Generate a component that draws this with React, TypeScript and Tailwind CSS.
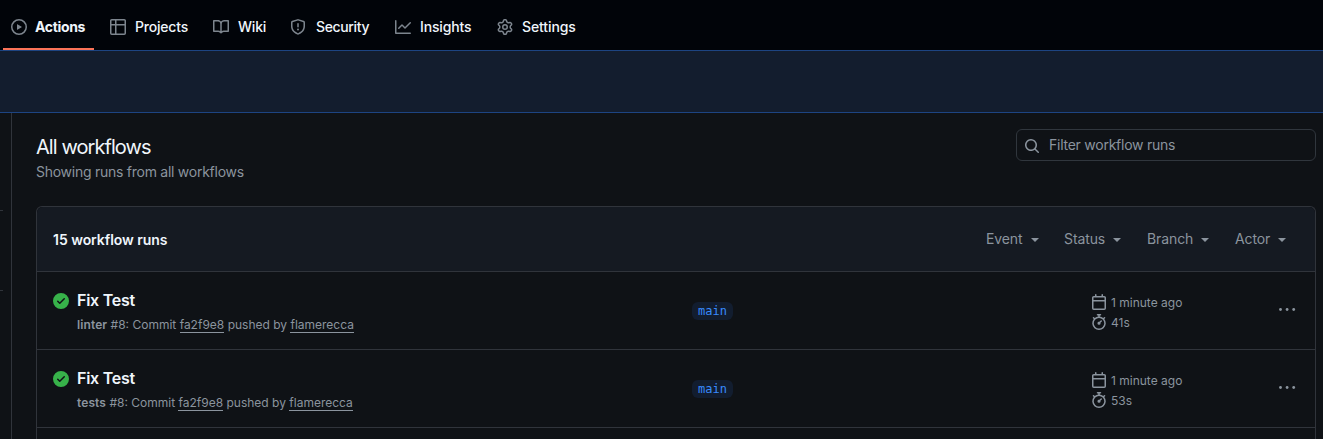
import type { ReactNode } from "react";

const paths = {
  play: "M1.5 8a6.5 6.5 0 1113 0 6.5 6.5 0 01-13 0zM8 0a8 8 0 100 16A8 8 0 008 0zM6.379 5.227A.25.25 0 006 5.442v5.117a.25.25 0 00.379.214l4.264-2.559a.25.25 0 000-.428L6.379 5.227z",
  table:
    "M0 1.75C0 .784.784 0 1.75 0h12.5C15.216 0 16 .784 16 1.75v3.585a.746.746 0 010 .83v8.085A1.75 1.75 0 0114.25 16H6.309a.748.748 0 01-1.118 0H1.75A1.75 1.75 0 010 14.25V6.165a.746.746 0 010-.83V1.75zM1.5 6.5v7.75c0 .138.112.25.25.25H5v-8H1.5zM5 5H1.5V1.75a.25.25 0 01.25-.25H5V5zm1.5 1.5v8h7.75a.25.25 0 00.25-.25V6.5h-8zm8-1.5h-8V1.5h7.75a.25.25 0 01.25.25V5z",
  book: "M0 1.75A.75.75 0 01.75 1h4.253c1.227 0 2.317.59 3 1.501A3.744 3.744 0 0111.006 1h4.245a.75.75 0 01.75.75v10.5a.75.75 0 01-.75.75h-4.507a2.25 2.25 0 00-1.591.659l-.622.621a.75.75 0 01-1.06 0l-.622-.621A2.25 2.25 0 005.258 13H.75a.75.75 0 01-.75-.75V1.75zm8.755 3a2.25 2.25 0 012.25-2.25H14.5v9h-3.757c-.71 0-1.4.201-1.992.572l.004-7.322zm-1.504 7.324l.004-5.073-.002-2.253A2.25 2.25 0 005.003 2.5H1.5v9h3.757a3.75 3.75 0 011.994.574z",
  shield:
    "M7.467.133a1.75 1.75 0 011.066 0l5.25 1.68A1.75 1.75 0 0115 3.48V7c0 1.566-.32 3.182-1.303 4.682-.983 1.498-2.585 2.813-5.032 3.855a1.7 1.7 0 01-1.33 0c-2.447-1.042-4.049-2.357-5.032-3.855C1.32 10.182 1 8.566 1 7V3.48a1.75 1.75 0 011.217-1.667l5.25-1.68zm.61 1.429a.25.25 0 00-.153 0l-5.25 1.68a.25.25 0 00-.174.238V7c0 1.358.275 2.666 1.057 3.86.784 1.194 2.121 2.34 4.366 3.297a.2.2 0 00.154 0c2.245-.956 3.582-2.104 4.366-3.298C13.225 9.666 13.5 8.36 13.5 7V3.48a.25.25 0 00-.174-.237l-5.25-1.68zM9 10.5a1 1 0 11-2 0 1 1 0 012 0zm-.25-5.75a.75.75 0 10-1.5 0v3a.75.75 0 001.5 0v-3z",
  graph:
    "M1.5 1.75a.75.75 0 00-1.5 0v12.5c0 .414.336.75.75.75h14.5a.75.75 0 000-1.5H1.5V1.75zm14.28 2.53a.75.75 0 00-1.06-1.06L10 7.94 7.53 5.47a.75.75 0 00-1.06 0L3.22 8.72a.75.75 0 001.06 1.06L7 7.06l2.47 2.47a.75.75 0 001.06 0l5.25-5.25z",
  gear: "M7.429 1.525a6.593 6.593 0 011.142 0c.036.003.108.036.137.146l.289 1.105c.147.56.55.967.997 1.189.174.086.341.183.501.29.417.278.97.423 1.53.27l1.102-.303c.11-.03.175.016.195.046.219.31.41.641.573.989.014.031.022.11-.059.19l-.815.806c-.411.406-.562.957-.53 1.456a4.588 4.588 0 010 .582c-.032.499.119 1.05.53 1.456l.815.806c.08.08.073.159.059.19a6.494 6.494 0 01-.573.99c-.02.029-.086.074-.195.045l-1.103-.303c-.559-.153-1.112-.008-1.529.27-.16.107-.327.204-.5.29-.449.222-.851.628-.998 1.189l-.289 1.105c-.029.11-.101.143-.137.146a6.613 6.613 0 01-1.142 0c-.036-.003-.108-.037-.137-.146l-.289-1.105c-.147-.56-.55-.967-.997-1.189a4.502 4.502 0 01-.501-.29c-.417-.278-.97-.423-1.53-.27l-1.102.303c-.11.03-.175-.016-.195-.046a6.492 6.492 0 01-.573-.989c-.014-.031-.022-.11.059-.19l.815-.806c.411-.406.562-.957.53-1.456a4.587 4.587 0 010-.582c.032-.499-.119-1.05-.53-1.456l-.815-.806c-.08-.08-.073-.159-.059-.19a6.44 6.44 0 01.573-.99c.02-.029.086-.075.195-.045l1.103.303c.559.153 1.112.008 1.529-.27.16-.107.327-.204.5-.29.449-.222.851-.628.998-1.189l.289-1.105c.029-.11.101-.143.137-.146zM8 0c-.236 0-.47.01-.701.03-.743.065-1.29.615-1.458 1.261l-.29 1.106c-.017.066-.078.158-.211.224a5.994 5.994 0 00-.668.386c-.123.082-.233.09-.3.071L3.27 2.776c-.644-.177-1.392.02-1.82.63a7.977 7.977 0 00-.704 1.217c-.315.675-.111 1.422.363 1.891l.815.806c.05.048.098.147.088.294a6.084 6.084 0 000 .772c.01.147-.038.246-.088.294l-.815.806c-.474.469-.678 1.216-.363 1.891.2.428.436.835.704 1.218.428.609 1.176.806 1.82.63l1.103-.303c.066-.019.176-.011.299.071.213.143.436.272.668.386.133.066.194.158.212.224l.289 1.106c.169.646.715 1.196 1.458 1.26a8.094 8.094 0 001.402 0c.743-.064 1.29-.614 1.458-1.26l.29-1.106c.017-.066.078-.158.211-.224a5.98 5.98 0 00.668-.386c.123-.082.233-.09.3-.071l1.102.302c.644.177 1.392-.02 1.82-.63.268-.382.505-.789.704-1.217.315-.675.111-1.422-.364-1.891l-.814-.806c-.05-.048-.098-.147-.088-.294a6.1 6.1 0 000-.772c-.01-.147.039-.246.088-.294l.814-.806c.475-.469.679-1.216.364-1.891a7.992 7.992 0 00-.704-1.218c-.428-.609-1.176-.806-1.82-.63l-1.103.303c-.066.019-.176.011-.299-.071a5.991 5.991 0 00-.668-.386c-.133-.066-.194-.158-.212-.224L10.16 1.29C9.99.645 9.444.095 8.701.031A8.094 8.094 0 008 0zM9.5 8a1.5 1.5 0 11-3 0 1.5 1.5 0 013 0zM11 8a3 3 0 11-6 0 3 3 0 016 0z",
  calendar:
    "M4.75 0a.75.75 0 01.75.75V2h5V.75a.75.75 0 011.5 0V2h1.25c.966 0 1.75.784 1.75 1.75v10.5A1.75 1.75 0 0113.25 16H2.75A1.75 1.75 0 011 14.25V3.75C1 2.784 1.784 2 2.75 2H4V.75A.75.75 0 014.75 0zm0 3.5h8.5a.25.25 0 01.25.25V6h-11V3.75a.25.25 0 01.25-.25h2zm-2.25 4v6.75c0 .138.112.25.25.25h10.5a.25.25 0 00.25-.25V7.5h-11z",
  stopwatch:
    "M5.75.75A.75.75 0 016.5 0h3a.75.75 0 010 1.5h-.75v1l-.001.041a6.718 6.718 0 013.464 1.435l.007-.006.75-.75a.75.75 0 111.06 1.06l-.75.75-.006.007a6.75 6.75 0 11-10.548 0L2.72 5.03l-.75-.75a.75.75 0 011.06-1.06l.75.75.007.006A6.718 6.718 0 017.25 2.541a.756.756 0 010-.041v-1H6.5a.75.75 0 01-.75-.75zM8 14.5A5.25 5.25 0 108 4a5.25 5.25 0 000 10.5zm.389-6.7l1.33-1.33a.75.75 0 111.061 1.06L9.45 8.861A1.502 1.502 0 018 10.75a1.5 1.5 0 11.389-2.95z",
  search:
    "M11.5 7a4.499 4.499 0 11-8.998 0A4.499 4.499 0 0111.5 7zm-.82 4.74a6 6 0 111.06-1.06l3.04 3.04a.75.75 0 11-1.06 1.06l-3.04-3.04z",
  check:
    "M8 16A8 8 0 108 0a8 8 0 000 16zm3.78-9.72a.75.75 0 00-1.06-1.06L6.75 9.19 5.28 7.72a.75.75 0 00-1.06 1.06l2 2a.75.75 0 001.06 0l4.5-4.5z",
};

type IconName = keyof typeof paths;

function Icon({ name, className = "" }: { name: IconName; className?: string }) {
  return (
    <svg viewBox="0 0 16 16" width="16" height="16" fill="currentColor" className={`shrink-0 ${className}`}>
      <path fillRule="evenodd" clipRule="evenodd" d={paths[name]} />
    </svg>
  );
}

const tabs: { icon: IconName; label: string; width: string; text: string }[] = [
  { icon: "play", label: "Actions", width: "w-[91px]", text: "font-bold tracking-[-0.35px]" },
  { icon: "table", label: "Projects", width: "w-[95px]", text: "ml-px font-[450] tracking-[-0.2px]" },
  { icon: "book", label: "Wiki", width: "w-[69px]", text: "ml-px font-[450] tracking-[-0.2px]" },
  { icon: "shield", label: "Security", width: "w-[97px]", text: "ml-0.5 font-[450] tracking-[-0.35px]" },
  { icon: "graph", label: "Insights", width: "w-[94px]", text: "ml-px font-[450] tracking-[-0.15px]" },
  { icon: "gear", label: "Settings", width: "w-[95px]", text: "ml-px font-[450] tracking-[-0.1px]" },
];

const filters = [
  { label: "Event", width: "w-[78px]" },
  { label: "Status", width: "w-[83px]" },
  { label: "Branch", width: "w-[88px]" },
  { label: "Actor", width: "w-[52px]" },
];

const runs = [
  { workflow: "linter", duration: "41s" },
  { workflow: "tests", duration: "53s" },
];

function Underlined({ children }: { children: ReactNode }) {
  return <a className="inline-block h-[16px] border-b border-[#8b949e] leading-[16px]">{children}</a>;
}

function Run({ workflow, duration }: { workflow: string; duration: string }) {
  return (
    <div className="flex h-[78px] shrink-0 border-b border-[#30343b] pl-4">
      <Icon name="check" className="mt-[21px] text-[#37b24a]" />
      <div className="ml-2 w-[615px] pt-[16px]">
        <div className="text-base leading-6 font-semibold tracking-[-0.25px] text-[#f0f6fc]">Fix Test</div>
        <div className="mt-[5px] text-xs leading-4 whitespace-nowrap">
          <span className="font-semibold tracking-[0.1px]">{workflow}</span> #8: Commit <Underlined>fa2f9e8</Underlined>{" "}
          pushed by <Underlined>flamerecca</Underlined>
        </div>
      </div>
      <div className="w-[399px] pt-[30px]">
        <div className="flex h-[18px] w-[41px] items-center justify-center rounded-md bg-[#121d2f] font-['DejaVu_Sans_Mono',monospace] text-xs text-[#388bfd]">
          main
        </div>
      </div>
      <div className="w-[188px] pt-[20px] text-xs">
        <div className="flex h-5 items-center gap-1">
          <Icon name="calendar" />
          <span className="pt-px">1 minute ago</span>
        </div>
        <div className="flex h-5 items-center gap-1">
          <Icon name="stopwatch" />
          <span className="pt-px">{duration}</span>
        </div>
      </div>
      <svg viewBox="0 0 17 4" className="mt-[35px] h-1 w-[17px] fill-[#8b949e]">
        <circle cx="1.5" cy="2.5" r="1.4" />
        <circle cx="8.1" cy="2.5" r="1.4" />
        <circle cx="14.7" cy="2.5" r="1.4" />
      </svg>
    </div>
  );
}

export default function App() {
  return (
    <div className="flex h-[439px] w-[1323px] flex-col overflow-hidden bg-[#0f1216] font-[Inter,sans-serif] text-sm text-[#8b949e]">
      <nav className="flex h-[50px] shrink-0 gap-2 bg-[#010409] pl-[3px]">
        {tabs.map((t, i) => (
          <a
            key={t.label}
            className={`flex shrink-0 items-center gap-2 border-b-2 pt-[6px] pl-2 ${t.width} ${i === 0 ? "border-[#fb7358]" : "border-transparent"}`}
          >
            <Icon name={t.icon} className="text-[#7d858e]" />
            <span className={`text-[#f0f6fc] ${t.text}`}>{t.label}</span>
          </a>
        ))}
      </nav>
      <div className="h-[63px] shrink-0 border-y border-[#1d4482] bg-[#131d2e]" />
      <div className="flex min-h-0 flex-1">
        <aside className="flex w-3 flex-col border-r border-[#30343b] pt-[97px]">
          <div className="h-px w-[3px] bg-[#30343b]" />
          <div className="mt-[79px] h-px w-[3px] bg-[#30343b]" />
        </aside>
        <main className="flex w-[1304px] flex-col pl-6">
          <header className="flex h-[93px] shrink-0 justify-between pt-[16px]">
            <div className="pt-[3px]">
              <h1 className="text-xl leading-[30px] tracking-[-0.93px] text-[#f0f6fc]">All workflows</h1>
              <p className="leading-5 tracking-[-0.26px]">Showing runs from all workflows</p>
            </div>
            <div className="flex h-8 w-[300px] items-center gap-[9px] rounded-md border border-[#30363d] pl-[7px]">
              <Icon name="search" className="mt-[2px]" />
              <span className="tracking-[-0.25px]">Filter workflow runs</span>
            </div>
          </header>
          <section className="flex min-h-0 flex-1 flex-col rounded-t-md border border-b-0 border-[#30343b]">
            <div className="flex h-[65px] shrink-0 items-center justify-between rounded-t-md border-b border-[#30343b] bg-[#151a22] pl-4">
              <h2 className="pt-[2px] font-semibold tracking-[-0.04px] text-[#f0f6fc]">15 workflow runs</h2>
              <div className="flex pr-[28px]">
                {filters.map((f) => (
                  <div key={f.label} className={`flex items-center ${f.width}`}>
                    <span className="tracking-[-0.1px]">{f.label}</span>
                    <span className="mt-px ml-2 border-x-4 border-t-4 border-x-transparent border-t-[#8b949e]" />
                  </div>
                ))}
              </div>
            </div>
            {runs.map((r) => (
              <Run key={r.workflow} {...r} />
            ))}
          </section>
        </main>
      </div>
    </div>
  );
}
